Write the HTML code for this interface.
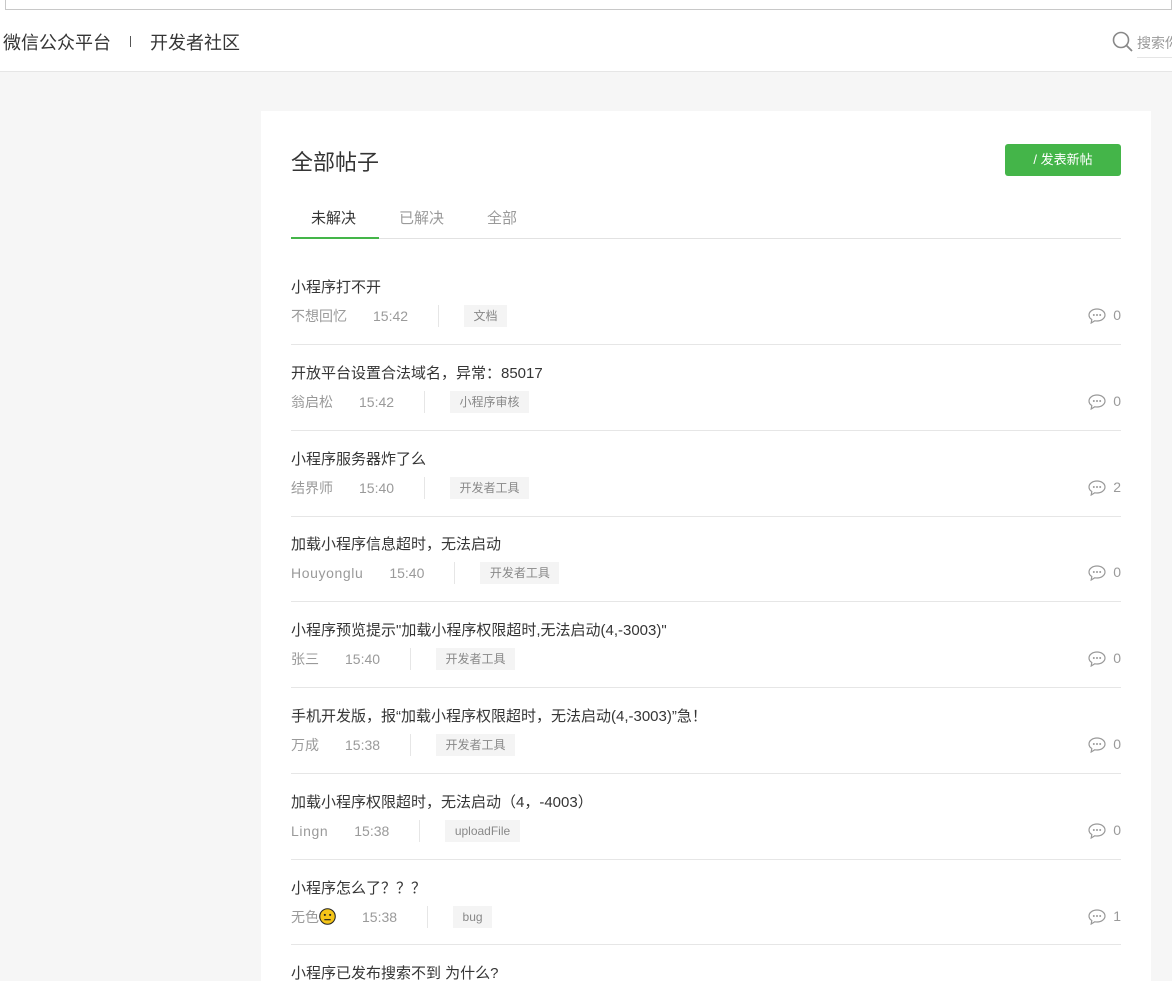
<!DOCTYPE html>
<html><head><meta charset="utf-8"><style>
*{margin:0;padding:0;box-sizing:border-box}
html{width:1172px;height:981px;overflow:hidden}
body{width:1172px;height:981px;overflow:hidden;background:#f6f6f6;font-family:"Liberation Sans","Noto Sans CJK SC",sans-serif;position:relative}
.top{position:absolute;left:0;top:0;width:1172px;height:72px;background:#fff;border-bottom:1px solid #e6e6e6}
.chrome{position:absolute;left:5px;top:0;width:1167px;height:10px;border:1px solid #c8c8c8;border-top:none;background:#fff}
.logo{position:absolute;left:3px;top:29px;font-size:18px;color:#353535}
.sep{position:absolute;left:130px;top:36px;width:1px;height:11px;background:#555}
.comm{position:absolute;left:150px;top:29px;font-size:18px;color:#353535}
.search{position:absolute;left:1112px;top:31px}
.stext{position:absolute;left:1137px;top:33px;font-size:14px;color:#999;white-space:nowrap}
.sline{position:absolute;left:1137px;top:57px;width:35px;height:1px;background:#e5e5e5}
.card{position:absolute;left:261px;top:111px;width:890px;height:870px;background:#fff}
h1{position:absolute;left:291px;top:145px;font-size:22px;font-weight:normal;color:#353535}
.btn{position:absolute;left:1005px;top:144px;width:116px;height:32px;background:#44b549;border-radius:3px;color:#fff;font-size:13px;line-height:32px;text-align:center}
.tabs{position:absolute;left:291px;top:238px;width:830px;height:1px;background:#e2e2e2}
.tab{position:absolute;top:207px;font-size:15px;color:#9a9a9a}
.act{position:absolute;left:291px;top:237px;width:88px;height:2px;background:#44b549}
.row{position:absolute;left:291px;width:830px;height:86px;border-bottom:1px solid #e6e6e6}
.t{position:absolute;left:0;top:-1px;font-size:15px;color:#353535;white-space:nowrap}
.m{position:absolute;left:0;top:28px;height:22px;display:flex;align-items:center;font-size:14px;color:#9a9a9a;white-space:nowrap}
.a{margin-right:26px}.tm{margin-right:30px}
.d{width:1px;height:22px;background:#e6e6e6;margin-right:25px}
.tag{background:#f4f4f4;font-size:12px;color:#888;height:22px;line-height:22px;padding:0 9.5px}
.c{position:absolute;right:0;top:30px;font-size:14px;color:#9a9a9a;display:flex;align-items:center}
.c svg{margin-right:7px;position:relative;top:1px}
</style></head><body>
<div class="top"><div class="chrome"></div>
<div class="logo">微信公众平台</div><div class="sep"></div><div class="comm">开发者社区</div>
<svg class="search" width="22" height="22" viewBox="0 0 22 22"><circle cx="9" cy="9" r="7.5" fill="none" stroke="#888" stroke-width="1.6"/><line x1="14.5" y1="14.5" x2="20" y2="20" stroke="#888" stroke-width="1.8"/></svg>
<div class="stext">搜索你</div><div class="sline"></div></div>
<div class="card"></div>
<h1>全部帖子</h1>
<div class="btn">/ 发表新帖</div>
<div class="tab" style="left:311px;color:#353535">未解决</div>
<div class="tab" style="left:399px">已解决</div>
<div class="tab" style="left:487px">全部</div>
<div class="tabs"></div><div class="act"></div>

<div class="row" style="top:277px;height:68px"><div class="t">小程序打不开</div><div class="m"><span class="a">不想回忆</span><span class="tm">15:42</span><span class="d"></span><span class="tag">文档</span></div><div class="c"><svg width="18" height="16" viewBox="0 0 18 16"><path d="M9 1C4.6 1 1 3.7 1 7c0 1.9 1.1 3.5 2.8 4.5L3.2 15l3.6-2.2c.7.1 1.4.2 2.2.2 4.4 0 8-2.7 8-6S13.4 1 9 1z" fill="none" stroke="#999" stroke-width="1.2"/><circle cx="5.8" cy="7" r="1" fill="#999"/><circle cx="9" cy="7" r="1" fill="#999"/><circle cx="12.2" cy="7" r="1" fill="#999"/></svg>0</div></div>

<div class="row" style="top:363px;height:68px"><div class="t">开放平台设置合法域名，异常：85017</div><div class="m"><span class="a">翁启松</span><span class="tm">15:42</span><span class="d"></span><span class="tag">小程序审核</span></div><div class="c"><svg width="18" height="16" viewBox="0 0 18 16"><path d="M9 1C4.6 1 1 3.7 1 7c0 1.9 1.1 3.5 2.8 4.5L3.2 15l3.6-2.2c.7.1 1.4.2 2.2.2 4.4 0 8-2.7 8-6S13.4 1 9 1z" fill="none" stroke="#999" stroke-width="1.2"/><circle cx="5.8" cy="7" r="1" fill="#999"/><circle cx="9" cy="7" r="1" fill="#999"/><circle cx="12.2" cy="7" r="1" fill="#999"/></svg>0</div></div>

<div class="row" style="top:449px;height:68px"><div class="t">小程序服务器炸了么</div><div class="m"><span class="a">结界师</span><span class="tm">15:40</span><span class="d"></span><span class="tag">开发者工具</span></div><div class="c"><svg width="18" height="16" viewBox="0 0 18 16"><path d="M9 1C4.6 1 1 3.7 1 7c0 1.9 1.1 3.5 2.8 4.5L3.2 15l3.6-2.2c.7.1 1.4.2 2.2.2 4.4 0 8-2.7 8-6S13.4 1 9 1z" fill="none" stroke="#999" stroke-width="1.2"/><circle cx="5.8" cy="7" r="1" fill="#999"/><circle cx="9" cy="7" r="1" fill="#999"/><circle cx="12.2" cy="7" r="1" fill="#999"/></svg>2</div></div>

<div class="row" style="top:534px;height:68px"><div class="t">加载小程序信息超时，无法启动</div><div class="m"><span class="a" style="letter-spacing:0.6px">Houyonglu</span><span class="tm">15:40</span><span class="d"></span><span class="tag">开发者工具</span></div><div class="c"><svg width="18" height="16" viewBox="0 0 18 16"><path d="M9 1C4.6 1 1 3.7 1 7c0 1.9 1.1 3.5 2.8 4.5L3.2 15l3.6-2.2c.7.1 1.4.2 2.2.2 4.4 0 8-2.7 8-6S13.4 1 9 1z" fill="none" stroke="#999" stroke-width="1.2"/><circle cx="5.8" cy="7" r="1" fill="#999"/><circle cx="9" cy="7" r="1" fill="#999"/><circle cx="12.2" cy="7" r="1" fill="#999"/></svg>0</div></div>

<div class="row" style="top:620px;height:68px"><div class="t">小程序预览提示"加载小程序权限超时,无法启动(4,-3003)"</div><div class="m"><span class="a">张三</span><span class="tm">15:40</span><span class="d"></span><span class="tag">开发者工具</span></div><div class="c"><svg width="18" height="16" viewBox="0 0 18 16"><path d="M9 1C4.6 1 1 3.7 1 7c0 1.9 1.1 3.5 2.8 4.5L3.2 15l3.6-2.2c.7.1 1.4.2 2.2.2 4.4 0 8-2.7 8-6S13.4 1 9 1z" fill="none" stroke="#999" stroke-width="1.2"/><circle cx="5.8" cy="7" r="1" fill="#999"/><circle cx="9" cy="7" r="1" fill="#999"/><circle cx="12.2" cy="7" r="1" fill="#999"/></svg>0</div></div>

<div class="row" style="top:706px;height:68px"><div class="t">手机开发版，报“加载小程序权限超时，无法启动(4,-3003)”急！</div><div class="m"><span class="a">万成</span><span class="tm">15:38</span><span class="d"></span><span class="tag">开发者工具</span></div><div class="c"><svg width="18" height="16" viewBox="0 0 18 16"><path d="M9 1C4.6 1 1 3.7 1 7c0 1.9 1.1 3.5 2.8 4.5L3.2 15l3.6-2.2c.7.1 1.4.2 2.2.2 4.4 0 8-2.7 8-6S13.4 1 9 1z" fill="none" stroke="#999" stroke-width="1.2"/><circle cx="5.8" cy="7" r="1" fill="#999"/><circle cx="9" cy="7" r="1" fill="#999"/><circle cx="12.2" cy="7" r="1" fill="#999"/></svg>0</div></div>

<div class="row" style="top:792px;height:68px"><div class="t">加载小程序权限超时，无法启动（4，-4003）</div><div class="m"><span class="a" style="letter-spacing:0.6px">Lingn</span><span class="tm">15:38</span><span class="d"></span><span class="tag">uploadFile</span></div><div class="c"><svg width="18" height="16" viewBox="0 0 18 16"><path d="M9 1C4.6 1 1 3.7 1 7c0 1.9 1.1 3.5 2.8 4.5L3.2 15l3.6-2.2c.7.1 1.4.2 2.2.2 4.4 0 8-2.7 8-6S13.4 1 9 1z" fill="none" stroke="#999" stroke-width="1.2"/><circle cx="5.8" cy="7" r="1" fill="#999"/><circle cx="9" cy="7" r="1" fill="#999"/><circle cx="12.2" cy="7" r="1" fill="#999"/></svg>0</div></div>

<div class="row" style="top:878px;height:67px"><div class="t">小程序怎么了？？？</div><div class="m"><span class="a">无色<svg width="17" height="17" viewBox="0 0 16 16" style="vertical-align:-3px"><circle cx="8" cy="8" r="7.3" fill="#f5c518" stroke="#222" stroke-width="1"/><circle cx="5.5" cy="6.5" r="1" fill="#222"/><circle cx="10.5" cy="6.5" r="1" fill="#222"/><line x1="5" y1="11" x2="11" y2="11" stroke="#222" stroke-width="1.1"/></svg></span><span class="tm">15:38</span><span class="d"></span><span class="tag">bug</span></div><div class="c"><svg width="18" height="16" viewBox="0 0 18 16"><path d="M9 1C4.6 1 1 3.7 1 7c0 1.9 1.1 3.5 2.8 4.5L3.2 15l3.6-2.2c.7.1 1.4.2 2.2.2 4.4 0 8-2.7 8-6S13.4 1 9 1z" fill="none" stroke="#999" stroke-width="1.2"/><circle cx="5.8" cy="7" r="1" fill="#999"/><circle cx="9" cy="7" r="1" fill="#999"/><circle cx="12.2" cy="7" r="1" fill="#999"/></svg>1</div></div>

<div class="row" style="top:963px;height:18px;border:none"><div class="t">小程序已发布搜索不到 为什么?</div></div>
</body></html>
